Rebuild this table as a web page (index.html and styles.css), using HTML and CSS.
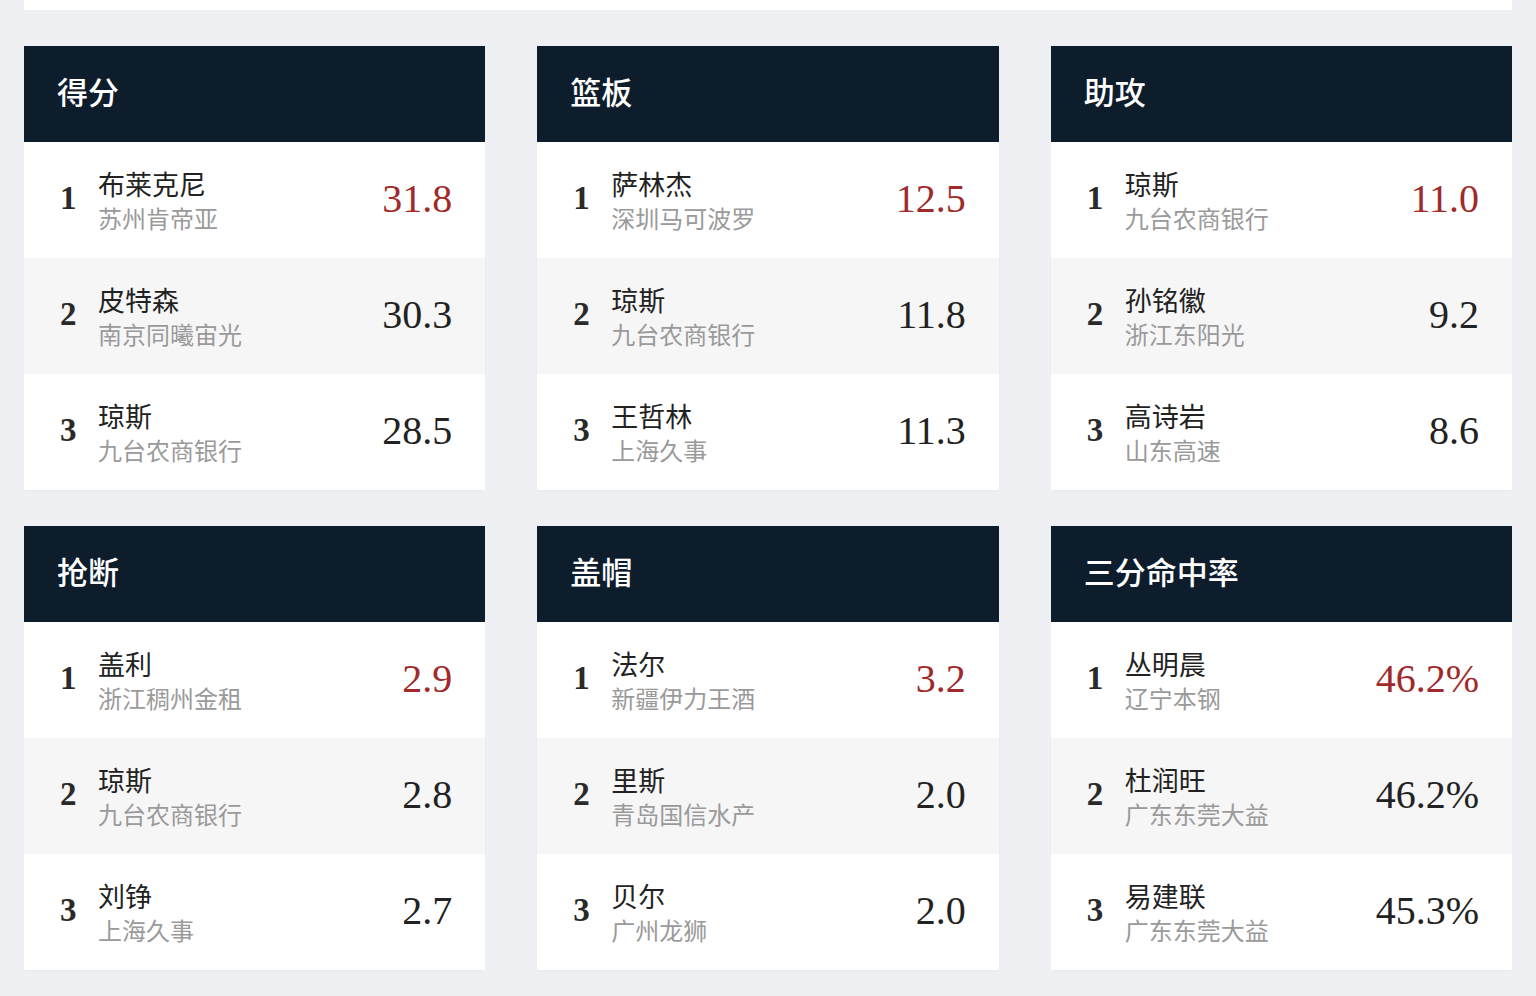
FILE: index.html
```html
<!DOCTYPE html>
<html lang="zh-CN">
<head>
<meta charset="utf-8">
<title>数据排行</title>
<link rel="stylesheet" href="styles.css">
</head>
<body>
<div class="page">
  <div class="top-card"></div>
  <div class="grid">
    <section class="card">
      <h2 class="card-title">得分</h2>
      <div class="row"><span class="rank">1</span><div class="who"><div class="name">布莱克尼</div><div class="team">苏州肯帝亚</div></div><span class="val top">31.8</span></div>
      <div class="row alt"><span class="rank">2</span><div class="who"><div class="name">皮特森</div><div class="team">南京同曦宙光</div></div><span class="val">30.3</span></div>
      <div class="row"><span class="rank">3</span><div class="who"><div class="name">琼斯</div><div class="team">九台农商银行</div></div><span class="val">28.5</span></div>
    </section>
    <section class="card">
      <h2 class="card-title">篮板</h2>
      <div class="row"><span class="rank">1</span><div class="who"><div class="name">萨林杰</div><div class="team">深圳马可波罗</div></div><span class="val top">12.5</span></div>
      <div class="row alt"><span class="rank">2</span><div class="who"><div class="name">琼斯</div><div class="team">九台农商银行</div></div><span class="val">11.8</span></div>
      <div class="row"><span class="rank">3</span><div class="who"><div class="name">王哲林</div><div class="team">上海久事</div></div><span class="val">11.3</span></div>
    </section>
    <section class="card">
      <h2 class="card-title">助攻</h2>
      <div class="row"><span class="rank">1</span><div class="who"><div class="name">琼斯</div><div class="team">九台农商银行</div></div><span class="val top">11.0</span></div>
      <div class="row alt"><span class="rank">2</span><div class="who"><div class="name">孙铭徽</div><div class="team">浙江东阳光</div></div><span class="val">9.2</span></div>
      <div class="row"><span class="rank">3</span><div class="who"><div class="name">高诗岩</div><div class="team">山东高速</div></div><span class="val">8.6</span></div>
    </section>
    <section class="card">
      <h2 class="card-title">抢断</h2>
      <div class="row"><span class="rank">1</span><div class="who"><div class="name">盖利</div><div class="team">浙江稠州金租</div></div><span class="val top">2.9</span></div>
      <div class="row alt"><span class="rank">2</span><div class="who"><div class="name">琼斯</div><div class="team">九台农商银行</div></div><span class="val">2.8</span></div>
      <div class="row"><span class="rank">3</span><div class="who"><div class="name">刘铮</div><div class="team">上海久事</div></div><span class="val">2.7</span></div>
    </section>
    <section class="card">
      <h2 class="card-title">盖帽</h2>
      <div class="row"><span class="rank">1</span><div class="who"><div class="name">法尔</div><div class="team">新疆伊力王酒</div></div><span class="val top">3.2</span></div>
      <div class="row alt"><span class="rank">2</span><div class="who"><div class="name">里斯</div><div class="team">青岛国信水产</div></div><span class="val">2.0</span></div>
      <div class="row"><span class="rank">3</span><div class="who"><div class="name">贝尔</div><div class="team">广州龙狮</div></div><span class="val">2.0</span></div>
    </section>
    <section class="card">
      <h2 class="card-title">三分命中率</h2>
      <div class="row"><span class="rank">1</span><div class="who"><div class="name">丛明晨</div><div class="team">辽宁本钢</div></div><span class="val top">46.2%</span></div>
      <div class="row alt"><span class="rank">2</span><div class="who"><div class="name">杜润旺</div><div class="team">广东东莞大益</div></div><span class="val">46.2%</span></div>
      <div class="row"><span class="rank">3</span><div class="who"><div class="name">易建联</div><div class="team">广东东莞大益</div></div><span class="val">45.3%</span></div>
    </section>
  </div>
</div>
</body>
</html>
```

FILE: styles.css
```css
* { box-sizing: border-box; }
html, body { margin: 0; padding: 0; }
body {
  background: #eff0f4;
  font-family: "Liberation Serif", "Noto Sans CJK SC", serif;
  width: 1536px;
  height: 996px;
  overflow: hidden;
}
.page {
  padding: 0 24px;
  display: flex;
  flex-direction: column;
  gap: 36px;
}
.top-card {
  height: 10px;
  background: #ffffff;
}
.grid {
  display: grid;
  grid-template-columns: repeat(3, 1fr);
  column-gap: 52px;
  row-gap: 36px;
}
.card {
  background: #ffffff;
  display: flex;
  flex-direction: column;
  box-shadow: 0 1px 2px rgba(0, 0, 0, 0.03);
}
.card-title {
  margin: 0;
  height: 96px;
  background: #0e1d2c;
  color: #ffffff;
  font-family: "Noto Sans CJK SC", sans-serif;
  font-weight: 500;
  font-size: 31px;
  display: flex;
  align-items: center;
  padding: 0 33px 7px;
}
.row {
  height: 116px;
  display: flex;
  align-items: center;
  padding: 0 33px;
  background: #ffffff;
}
.row.alt { background: #f6f6f7; }
.rank {
  width: 41px;
  flex: none;
  font-family: "Liberation Serif", serif;
  font-weight: 700;
  font-size: 33px;
  color: #2a2a2a;
  padding-left: 3px;
  margin-top: -4px;
}
.who {
  flex: 1;
  display: flex;
  flex-direction: column;
  font-family: "Noto Sans CJK SC", sans-serif;
}
.name {
  font-size: 27px;
  line-height: 36px;
  color: #222222;
}
.team {
  font-size: 24px;
  line-height: 32px;
  color: #9a9a9a;
}
.val {
  font-family: "Liberation Serif", serif;
  font-size: 40px;
  color: #222222;
  margin-top: -4px;
}
.val.top { color: #a02a2a; }
```
